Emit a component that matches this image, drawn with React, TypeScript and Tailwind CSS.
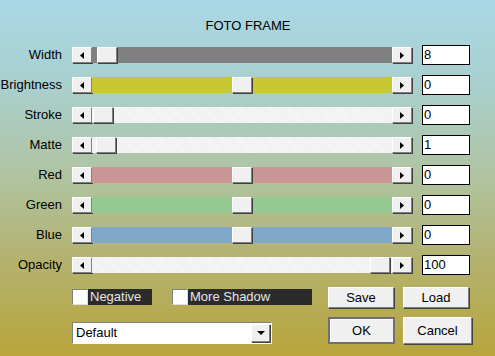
import React from "react";

interface SliderRow {
  label: string;
  value: string;
  thumb: number; // left offset of the thumb inside track, px
  track: string;
  hatch?: boolean;
}

const rows: SliderRow[] = [
  { label: "Width", value: "8", thumb: 5, track: "bg-[#808080]" },
  { label: "Brightness", value: "0", thumb: 140, track: "bg-[#c9c833]" },
  { label: "Stroke", value: "0", thumb: 1, track: "bg-[#f6f6f6]", hatch: true },
  { label: "Matte", value: "1", thumb: 4, track: "bg-[#f6f6f6]", hatch: true },
  { label: "Red", value: "0", thumb: 140, track: "bg-[#c99595]" },
  { label: "Green", value: "0", thumb: 140, track: "bg-[#95c992]" },
  { label: "Blue", value: "0", thumb: 140, track: "bg-[#80a8cb]" },
  { label: "Opacity", value: "100", thumb: 278, track: "bg-[#f6f6f6]", hatch: true },
];

const bevel =
  "bg-[#f0f0f0] border border-t-white border-l-white border-r-[#808080] border-b-[#808080] shadow-[1px_1px_0_#404040]";

function ArrowButton({ dir }: { dir: "left" | "right" }) {
  return (
    <div className={`w-[20px] h-[16px] flex items-center justify-center shrink-0 ${bevel}`}>
      <svg width="4" height="7" viewBox="0 0 4 7">
        {dir === "left" ? <polygon points="4,0 4,7 0,3.5" fill="#000" /> : <polygon points="0,0 0,7 4,3.5" fill="#000" />}
      </svg>
    </div>
  );
}

function Scrollbar({ row }: { row: SliderRow }) {
  return (
    <div className="flex w-[340px] h-[16px]">
      <ArrowButton dir="left" />
      <div
        className={`relative flex-1 h-[16px] ${row.track}`}
        style={
          row.hatch
            ? { backgroundImage: "repeating-linear-gradient(45deg, #f0f0f0 0 1px, transparent 1px 2px)" }
            : undefined
        }
      >
        <div className={`absolute top-0 w-[20px] h-[16px] ${bevel}`} style={{ left: row.thumb }} />
      </div>
      <ArrowButton dir="right" />
    </div>
  );
}

function CheckItem({ label, w }: { label: string; w: string }) {
  return (
    <div className="flex items-center h-[16px]">
      <div className="w-[16px] h-[16px] bg-white border border-t-[#808080] border-l-[#808080] border-r-[#e0e0e0] border-b-[#e0e0e0]" />
      <div className={`h-[16px] bg-[#2b2b2b] text-[#e6e6e6] text-[13px] leading-[16px] pl-[2px] ${w}`}>{label}</div>
    </div>
  );
}

export default function App() {
  return (
    <div
      className="w-[495px] h-[356px] overflow-hidden bg-[linear-gradient(180deg,#a9d8e6_0%,#a9cfcc_25%,#b0c3a0_50%,#b3b370_72%,#b8a53c_100%)] text-black"
      style={{ fontFamily: '"Liberation Sans", Arial, sans-serif' }}
    >
      <div className="text-center text-[13px] leading-[14px] pt-[19px] pl-[1px]">FOTO FRAME</div>

      <div className="flex flex-col gap-[10px] mt-[12px]">
        {rows.map((row) => (
          <div key={row.label} className="flex items-center h-[20px]">
            <div className="w-[62px] text-right text-[13px] leading-[16px]">{row.label}</div>
            <div className="ml-[10px]">
              <Scrollbar row={row} />
            </div>
            <div className="ml-[10px] w-[48px] h-[20px] bg-white border border-black text-[13px] leading-[18px] pl-[1px]">
              {row.value}
            </div>
          </div>
        ))}
      </div>

      <div className="flex mt-[12px] pl-[72px]">
        <div className="flex flex-col w-[256px]">
          <div className="flex gap-[20px] mt-[2px]">
            <CheckItem label="Negative" w="w-[64px]" />
            <CheckItem label="More Shadow" w="w-[124px]" />
          </div>
          <div className="mt-[17px] w-[200px] h-[22px] bg-white border border-t-[#808080] border-l-[#808080] border-r-white border-b-white flex items-center justify-between">
            <span className="text-[13px] pl-[3px] leading-[16px]">Default</span>
            <div className={`w-[19px] h-[18px] mr-[1px] flex items-center justify-center ${bevel}`}>
              <svg width="8" height="4" viewBox="0 0 8 4">
                <polygon points="0,0 8,0 4,4" fill="#000" />
              </svg>
            </div>
          </div>
        </div>
        <div className="flex flex-col">
          <div className="flex gap-[9px]">
            <button className={`w-[66px] h-[21px] text-[13px] leading-[16px] ${bevel}`}>Save</button>
            <button className={`w-[66px] h-[21px] text-[13px] leading-[16px] ${bevel}`}>Load</button>
          </div>
          <div className="flex gap-[8px] mt-[9px]">
            <button className="w-[67px] h-[27px] text-[13px] bg-[#f0f0f0] border-2 border-[#707070] shadow-[inset_1px_1px_0_white]">OK</button>
            <button className="w-[69px] h-[27px] text-[13px] bg-[#f0f0f0] border border-t-white border-l-white border-r-[#808080] border-b-[#808080] shadow-[1px_1px_0_#404040]">Cancel</button>
          </div>
        </div>
      </div>
    </div>
  );
}
